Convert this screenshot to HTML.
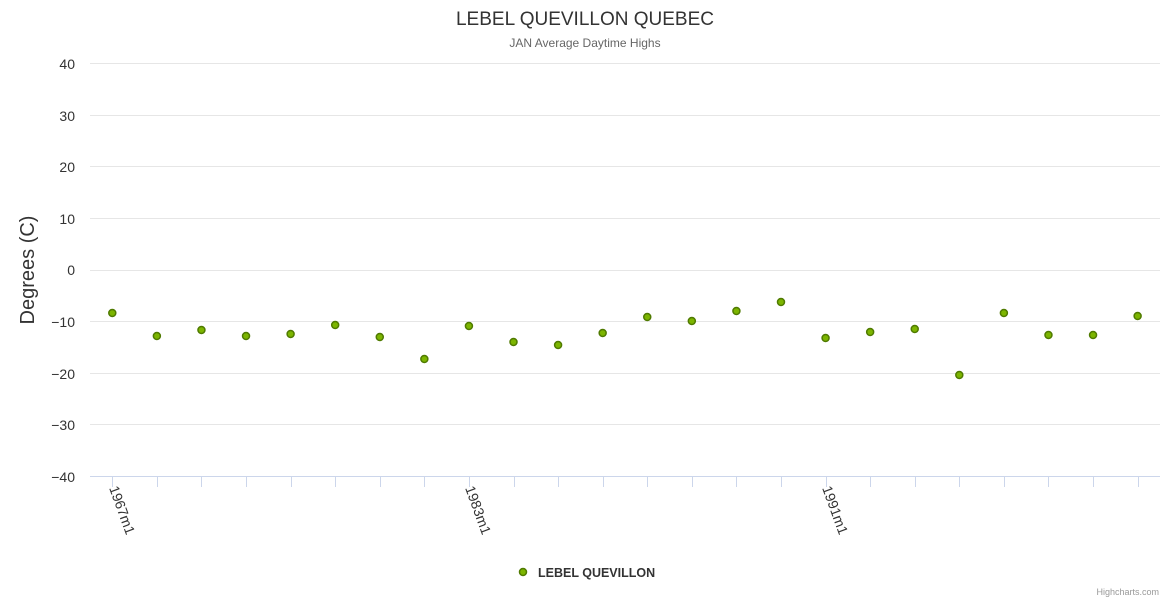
<!DOCTYPE html>
<html><head><meta charset="utf-8"><style>
body{margin:0;background:#fff;width:1170px;height:600px;overflow:hidden}
text{font-family:"Liberation Sans",sans-serif}
</style></head><body>
<svg width="1170" height="600" xmlns="http://www.w3.org/2000/svg">
<text x="585" y="25" text-anchor="middle" font-size="19" fill="#333">LEBEL QUEVILLON QUEBEC</text>
<text x="585" y="47" text-anchor="middle" font-size="12" fill="#666">JAN Average Daytime Highs</text>
<g stroke="#e6e6e6" stroke-width="1">
<line x1="90" x2="1160" y1="63.5" y2="63.5"/><line x1="90" x2="1160" y1="115.5" y2="115.5"/>
<line x1="90" x2="1160" y1="166.5" y2="166.5"/><line x1="90" x2="1160" y1="218.5" y2="218.5"/>
<line x1="90" x2="1160" y1="270.5" y2="270.5"/><line x1="90" x2="1160" y1="321.5" y2="321.5"/>
<line x1="90" x2="1160" y1="373.5" y2="373.5"/><line x1="90" x2="1160" y1="424.5" y2="424.5"/>
</g>
<line x1="90" x2="1160" y1="476.5" y2="476.5" stroke="#ccd6eb"/>
<g font-size="14" fill="#333" text-anchor="end">
<text x="75" y="69">40</text><text x="75" y="121">30</text><text x="75" y="172">20</text><text x="75" y="224">10</text>
<text x="75" y="275">0</text><text x="75" y="327">−10</text><text x="75" y="379">−20</text><text x="75" y="430">−30</text><text x="75" y="482">−40</text>
</g>
<text transform="translate(34,270) rotate(-90)" text-anchor="middle" font-size="20" fill="#333">Degrees (C)</text>
<g id="ticks" stroke="#ccd6eb"></g>
<g font-size="14" fill="#333">
<text transform="translate(109,488) rotate(70)">1967m1</text>
<text transform="translate(465,488) rotate(70)">1983m1</text>
<text transform="translate(822,488) rotate(70)">1991m1</text>
</g>
<g id="pts" fill="#7cb500" stroke="#4f7a00" stroke-width="1.5"></g>
<circle cx="523" cy="572" r="3.5" fill="#7cb500" stroke="#4f7a00" stroke-width="1.5"/>
<text x="538" y="577" font-size="12.5" font-weight="bold" fill="#333">LEBEL QUEVILLON</text>
<text x="1159" y="595" text-anchor="end" font-size="9" fill="#999">Highcharts.com</text>
</svg>
<script>
var ys=[313,336,330,336,334,325,337,359,326,342,345,333,317,321,311,302,338,332,329,375,313,335,335,316];
var t=document.getElementById('ticks'),p=document.getElementById('pts'),ns='http://www.w3.org/2000/svg';
ys.forEach(function(y,i){var x=90+44.58*(i+0.5);
var l=document.createElementNS(ns,'line');l.setAttribute('x1',Math.round(x)+.5);l.setAttribute('x2',Math.round(x)+.5);l.setAttribute('y1',477);l.setAttribute('y2',487);t.appendChild(l);
var c=document.createElementNS(ns,'circle');c.setAttribute('cx',x);c.setAttribute('cy',y);c.setAttribute('r',3.5);p.appendChild(c);});
</script>
</body></html>
